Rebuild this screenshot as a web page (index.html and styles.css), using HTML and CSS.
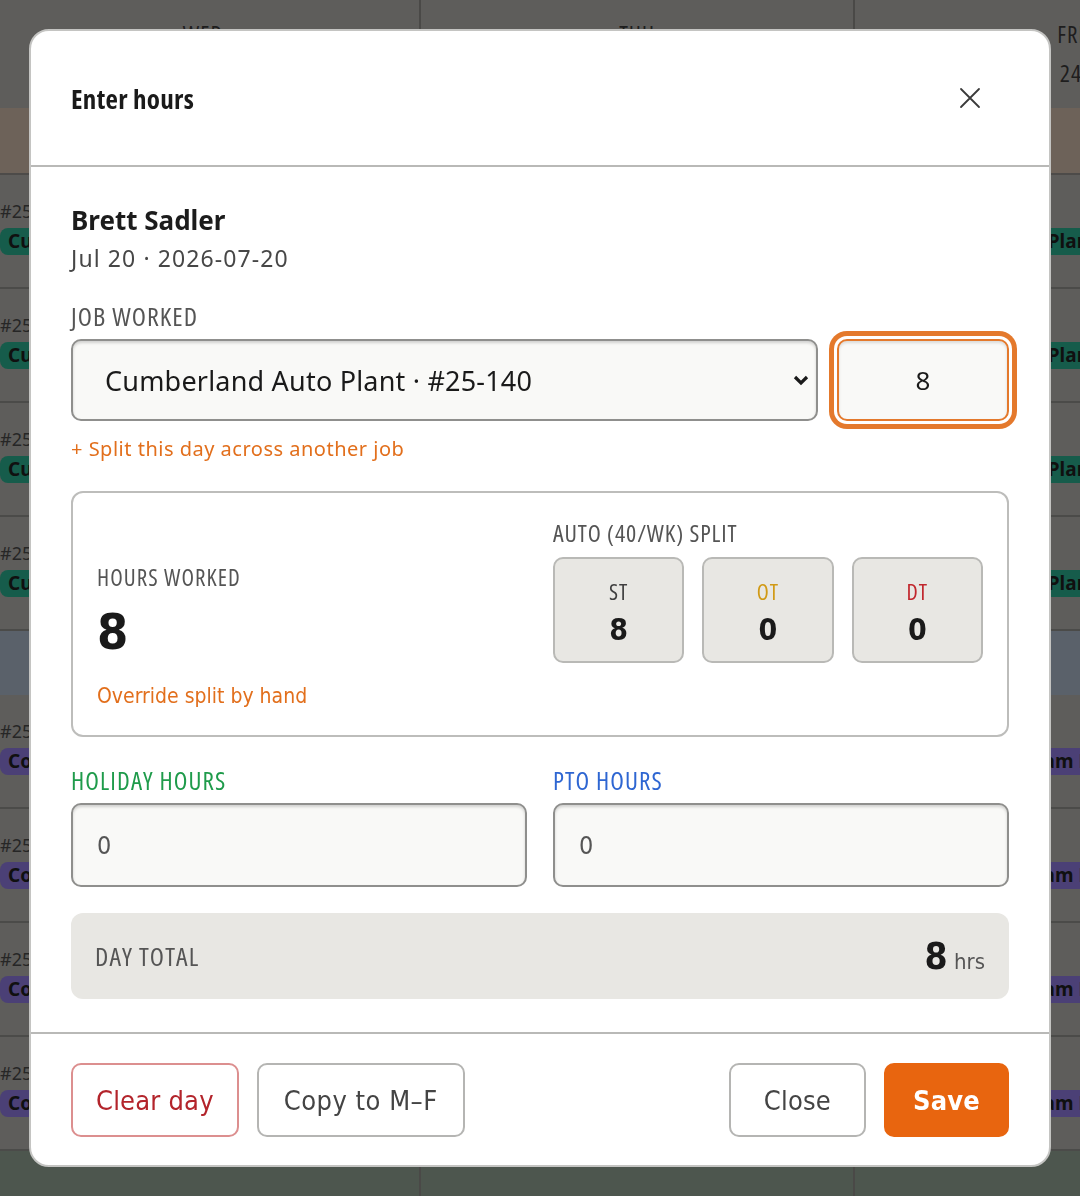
FILE: index.html
```html
<!DOCTYPE html>
<html lang="en">
<head>
<meta charset="utf-8">
<title>Enter hours</title>
<link rel="stylesheet" href="styles.css">
</head>
<body>
<div class="calendar">
  <div class="week">
    <div class="day">
      <div class="day-head"><span class="dow">WED</span><span class="dom">22</span></div>
      <div class="band band-orange"></div>
      <div class="cell"><span class="job">#25-140</span><span class="chip chip-teal">Cumberland Auto Plant</span></div>
      <div class="cell"><span class="job">#25-140</span><span class="chip chip-teal">Cumberland Auto Plant</span></div>
      <div class="cell"><span class="job">#25-140</span><span class="chip chip-teal">Cumberland Auto Plant</span></div>
      <div class="cell"><span class="job">#25-140</span><span class="chip chip-teal">Cumberland Auto Plant</span></div>
      <div class="band band-blue"></div>
      <div class="cell"><span class="job">#25-162</span><span class="chip chip-purple">Conway Fossil Steam Plant</span></div>
      <div class="cell"><span class="job">#25-162</span><span class="chip chip-purple">Conway Fossil Steam Plant</span></div>
      <div class="cell"><span class="job">#25-162</span><span class="chip chip-purple">Conway Fossil Steam Plant</span></div>
      <div class="cell"><span class="job">#25-162</span><span class="chip chip-purple">Conway Fossil Steam Plant</span></div>
      <div class="band band-green"></div>
    </div>
    <div class="day">
      <div class="day-head"><span class="dow">THU</span><span class="dom">23</span></div>
      <div class="band band-orange"></div>
      <div class="cell"><span class="job">#25-140</span><span class="chip chip-teal">Cumberland Auto Plant</span></div>
      <div class="cell"><span class="job">#25-140</span><span class="chip chip-teal">Cumberland Auto Plant</span></div>
      <div class="cell"><span class="job">#25-140</span><span class="chip chip-teal">Cumberland Auto Plant</span></div>
      <div class="cell"><span class="job">#25-140</span><span class="chip chip-teal">Cumberland Auto Plant</span></div>
      <div class="band band-blue"></div>
      <div class="cell"><span class="job">#25-162</span><span class="chip chip-purple">Conway Fossil Steam Plant</span></div>
      <div class="cell"><span class="job">#25-162</span><span class="chip chip-purple">Conway Fossil Steam Plant</span></div>
      <div class="cell"><span class="job">#25-162</span><span class="chip chip-purple">Conway Fossil Steam Plant</span></div>
      <div class="cell"><span class="job">#25-162</span><span class="chip chip-purple">Conway Fossil Steam Plant</span></div>
      <div class="band band-green"></div>
    </div>
    <div class="day">
      <div class="day-head"><span class="dow">FRI</span><span class="dom">24</span></div>
      <div class="band band-orange"></div>
      <div class="cell"><span class="job">#25-140</span><span class="chip chip-teal">Cumberland Auto Plant</span></div>
      <div class="cell"><span class="job">#25-140</span><span class="chip chip-teal">Cumberland Auto Plant</span></div>
      <div class="cell"><span class="job">#25-140</span><span class="chip chip-teal">Cumberland Auto Plant</span></div>
      <div class="cell"><span class="job">#25-140</span><span class="chip chip-teal">Cumberland Auto Plant</span></div>
      <div class="band band-blue"></div>
      <div class="cell"><span class="job">#25-162</span><span class="chip chip-purple">Conway Fossil Steam Plant</span></div>
      <div class="cell"><span class="job">#25-162</span><span class="chip chip-purple">Conway Fossil Steam Plant</span></div>
      <div class="cell"><span class="job">#25-162</span><span class="chip chip-purple">Conway Fossil Steam Plant</span></div>
      <div class="cell"><span class="job">#25-162</span><span class="chip chip-purple">Conway Fossil Steam Plant</span></div>
      <div class="band band-green"></div>
    </div>
  </div>
</div>

<div class="scrim">
  <section class="modal" role="dialog" aria-label="Enter hours">
    <header class="modal-head">
      <h2 class="modal-title">Enter hours</h2>
      <button class="icon-close" aria-label="Close">
        <svg width="22" height="22" viewBox="0 0 22 22"><path d="M2 2 L20 20 M20 2 L2 20" stroke="#3a3a3a" stroke-width="1.8" fill="none" stroke-linecap="round"/></svg>
      </button>
    </header>

    <div class="modal-body">
      <div class="name">Brett Sadler</div>
      <div class="date">Jul 20 · 2026-07-20</div>

      <div class="cap-label job-label">JOB WORKED</div>
      <div class="job-row">
        <div class="select-wrap">
          <select class="select">
            <option>Cumberland Auto Plant · #25-140</option>
          </select>
          <svg class="chevron" width="16" height="11" viewBox="0 0 16 11"><path d="M2 2 L8 8 L14 2" stroke="#1a1a1a" stroke-width="3.2" fill="none" stroke-linejoin="miter"/></svg>
        </div>
        <input class="hours-input" type="text" value="8">
      </div>
      <a class="link split-link">+ Split this day across another job</a>

      <div class="summary">
        <div class="worked">
          <div class="cap-label worked-cap">HOURS WORKED</div>
          <div class="big-num">8</div>
          <a class="link-cond">Override split by hand</a>
        </div>
        <div class="auto">
          <div class="cap-label auto-cap">AUTO (40/WK) SPLIT</div>
          <div class="tiles">
            <div class="tile"><span class="tile-cap st">ST</span><span class="tile-val">8</span></div>
            <div class="tile"><span class="tile-cap ot">OT</span><span class="tile-val">0</span></div>
            <div class="tile"><span class="tile-cap dt">DT</span><span class="tile-val">0</span></div>
          </div>
        </div>
      </div>

      <div class="extra">
        <div class="extra-field">
          <div class="cap-label extra-cap holiday">HOLIDAY HOURS</div>
          <input class="text-input" type="text" value="0">
        </div>
        <div class="extra-field">
          <div class="cap-label extra-cap pto">PTO HOURS</div>
          <input class="text-input" type="text" value="0">
        </div>
      </div>

      <div class="total">
        <span class="cap-label total-cap">DAY TOTAL</span>
        <span class="total-val"><b>8</b> hrs</span>
      </div>
    </div>

    <footer class="modal-foot">
      <button class="btn btn-danger">Clear day</button>
      <button class="btn btn-copy">Copy to M–F</button>
      <span class="spacer"></span>
      <button class="btn btn-wide">Close</button>
      <button class="btn btn-primary">Save</button>
    </footer>
  </section>
</div>
</body>
</html>
```

FILE: styles.css
```css
* { box-sizing: border-box; }

html, body {
  margin: 0;
  width: 1080px;
  height: 1196px;
  overflow: hidden;
}

body {
  background: #5e5d5b;
  font-family: "Noto Sans", "Liberation Sans", sans-serif;
  color: #1a1a1a;
}

/* ---------- background calendar (dimmed) ---------- */
.calendar {
  width: 1080px;
  height: 1196px;
  overflow: hidden;
}

.week {
  display: flex;
  margin-left: -13px;
}

.day {
  flex: none;
  width: 434px;
  height: 1196px;
  display: flex;
  flex-direction: column;
  border-right: 2px solid #4a4947;
}

.day-head {
  height: 108px;
  display: flex;
  flex-direction: column;
  align-items: center;
  padding-top: 21px;
  gap: 12px;
  font-family: "Open Sans", sans-serif;
  font-stretch: 75%;
  letter-spacing: 1px;
  color: #1e1e1e;
}
.dow { font-size: 23px; line-height: 26px; }
.dom { font-size: 24px; line-height: 28px; }

.band-orange { height: 67px; background: #6d6259; border-bottom: 2px solid #4d4b49; }
.band-blue { height: 64px; background: #5a616a; }
.band-green { flex: 1; background: #4d564e; }

.cell {
  height: 114px;
  border-bottom: 2px solid #4b4b49;
  padding: 24px 0 0 13px;
  display: flex;
  flex-direction: column;
  align-items: flex-start;
  gap: 5px;
}
.job { font-size: 18px; line-height: 24px; color: #262626; }
.chip {
  height: 27px;
  line-height: 27px;
  padding: 0 8px;
  border-radius: 8px;
  font-size: 19px;
  font-weight: 700;
  color: #101010;
  white-space: nowrap;
}
.chip-teal { background: #165c4b; }
.chip-purple { background: #4b4076; }

/* ---------- modal ---------- */
.scrim {
  position: fixed;
  inset: 0;
  display: flex;
  justify-content: center;
  align-items: flex-start;
  padding-top: 29px;
}

.modal {
  width: 1022px;
  background: #fff;
  border: 2px solid #c4c4c2;
  border-radius: 20px;
  overflow: hidden;
}

.modal-head {
  height: 136px;
  display: flex;
  align-items: center;
  justify-content: space-between;
  padding: 0 65px 0 40px;
  border-bottom: 2px solid #b9b9b7;
}

.modal-title {
  margin: 0;
  font-family: "Open Sans", sans-serif;
  font-stretch: 75%;
  font-size: 27px;
  font-weight: 700;
  letter-spacing: 0.3px;
  color: #1a1a1a;
}

.icon-close {
  width: 28px;
  height: 28px;
  padding: 0;
  border: 0;
  background: none;
  display: flex;
  align-items: center;
  justify-content: center;
}

.modal-body {
  padding: 36px 40px 33px;
  display: flex;
  flex-direction: column;
}

.name {
  font-size: 26px;
  line-height: 34px;
  font-weight: 700;
  color: #1c1c1c;
}

.date {
  margin-top: 6px;
  font-size: 23px;
  line-height: 30px;
  letter-spacing: 1.1px;
  color: #474747;
}

.cap-label {
  font-family: "Open Sans", sans-serif;
  font-stretch: 75%;
  font-size: 23px;
  line-height: 26px;
  letter-spacing: 1.05px;
  color: #555;
}

.job-label {
  margin-top: 30px;
  font-size: 26px;
}

.job-row {
  margin-top: 10px;
  display: flex;
  gap: 19px;
}

.select-wrap {
  position: relative;
  flex: 1;
}

.select {
  width: 100%;
  height: 82px;
  appearance: none;
  -webkit-appearance: none;
  border: 2px solid #8f8f8d;
  border-radius: 10px;
  background: #f9f9f7;
  box-shadow: inset 0 2px 3px rgba(0,0,0,0.16);
  padding: 0 0 0 32px;
  font-family: "Noto Sans", "Liberation Sans", sans-serif;
  font-size: 27px;
  letter-spacing: 0.2px;
  color: #1a1a1a;
}

.chevron {
  position: absolute;
  right: 9px;
  top: 36px;
}

.hours-input {
  width: 172px;
  height: 82px;
  border: 2px solid #e4792c;
  border-radius: 10px;
  background: #f9f9f7;
  box-shadow: 0 0 0 3px #fff, 0 0 0 8px #e4792c, inset 0 2px 3px rgba(0,0,0,0.12);
  text-align: center;
  font-family: "Noto Sans", "Liberation Sans", sans-serif;
  font-size: 26px;
  color: #1a1a1a;
  outline: none;
}

.link {
  font-size: 20px;
  line-height: 26px;
  letter-spacing: 0.5px;
  color: #e26f1c;
}

.split-link { margin-top: 15px; }

.summary {
  margin-top: 29px;
  border: 2px solid #bdbdbb;
  border-radius: 12px;
  padding: 27px 24px 25px;
  display: grid;
  grid-template-columns: 1fr 1fr;
  column-gap: 26px;
}

.worked {
  padding-top: 44px;
  display: flex;
  flex-direction: column;
  align-items: flex-start;
}

.auto-cap { font-size: 24px; letter-spacing: 0.9px; }

.big-num {
  margin-top: 14px;
  font-family: "DejaVu Sans Condensed", sans-serif;
  font-size: 50px;
  line-height: 56px;
  font-weight: 700;
  color: #1a1a1a;
}

.link-cond {
  margin-top: 22px;
  font-family: "DejaVu Sans Condensed", sans-serif;
  font-size: 21px;
  line-height: 28px;
  color: #e26f1c;
}

.tiles {
  margin-top: 11px;
  display: grid;
  grid-template-columns: repeat(3, 1fr);
  gap: 18px;
}

.tile {
  height: 106px;
  background: #e8e7e3;
  border: 2px solid #b9b9b6;
  border-radius: 10px;
  display: flex;
  flex-direction: column;
  align-items: center;
  padding-top: 20px;
  gap: 10px;
}

.tile-cap {
  font-family: "Open Sans", sans-serif;
  font-stretch: 75%;
  font-size: 22px;
  line-height: 24px;
  letter-spacing: 1.1px;
  font-weight: 500;
}
.st { color: #3f3f3f; }
.ot { color: #d19a16; }
.dt { color: #c1272d; }

.tile-val {
  font-family: "DejaVu Sans Condensed", sans-serif;
  font-size: 30px;
  line-height: 34px;
  font-weight: 700;
  color: #1a1a1a;
}

.extra {
  margin-top: 29px;
  display: grid;
  grid-template-columns: 1fr 1fr;
  column-gap: 26px;
}

.extra-cap {
  font-size: 25px;
  line-height: 28px;
  font-weight: 500;
  letter-spacing: 1.1px;
}
.holiday { color: #1f9b4b; }
.pto { color: #2e66d2; }

.text-input {
  margin-top: 9px;
  width: 100%;
  height: 84px;
  border: 2px solid #8f8f8d;
  border-radius: 10px;
  background: #f9f9f7;
  box-shadow: inset 0 2px 3px rgba(0,0,0,0.16);
  padding: 0 0 0 24px;
  font-family: "DejaVu Sans Condensed", sans-serif;
  font-size: 25px;
  color: #555;
  outline: none;
}

.total {
  margin-top: 26px;
  height: 86px;
  background: #e8e7e3;
  border-radius: 12px;
  display: flex;
  align-items: center;
  justify-content: space-between;
  padding: 0 24px;
}

.total-cap { font-size: 26px; letter-spacing: 1.1px; }

.total-val {
  font-family: "DejaVu Sans Condensed", sans-serif;
  font-size: 22px;
  color: #555;
}
.total-val b {
  font-size: 37px;
  color: #1a1a1a;
}

.modal-foot {
  border-top: 2px solid #b9b9b7;
  padding: 29px 40px 28px;
  display: flex;
  gap: 18px;
}

.spacer { flex: 1; margin-right: -1px; }

.btn {
  height: 74px;
  padding: 0 24px;
  border: 2px solid #b5b5b3;
  border-radius: 10px;
  background: #fff;
  font-family: "DejaVu Sans Condensed", sans-serif;
  font-size: 27px;
  letter-spacing: 0.2px;
  color: #444;
}

.btn-copy { padding: 0 25px; letter-spacing: 0.5px; }
.btn-wide { padding: 0 33px; }

.btn-danger {
  padding: 0 23px;
  border-color: #dc8f8f;
  color: #b3242b;
}

.btn-primary {
  padding: 0 27px;
  background: #e8650f;
  border-color: #e8650f;
  color: #fff;
  font-weight: 700;
}
```
